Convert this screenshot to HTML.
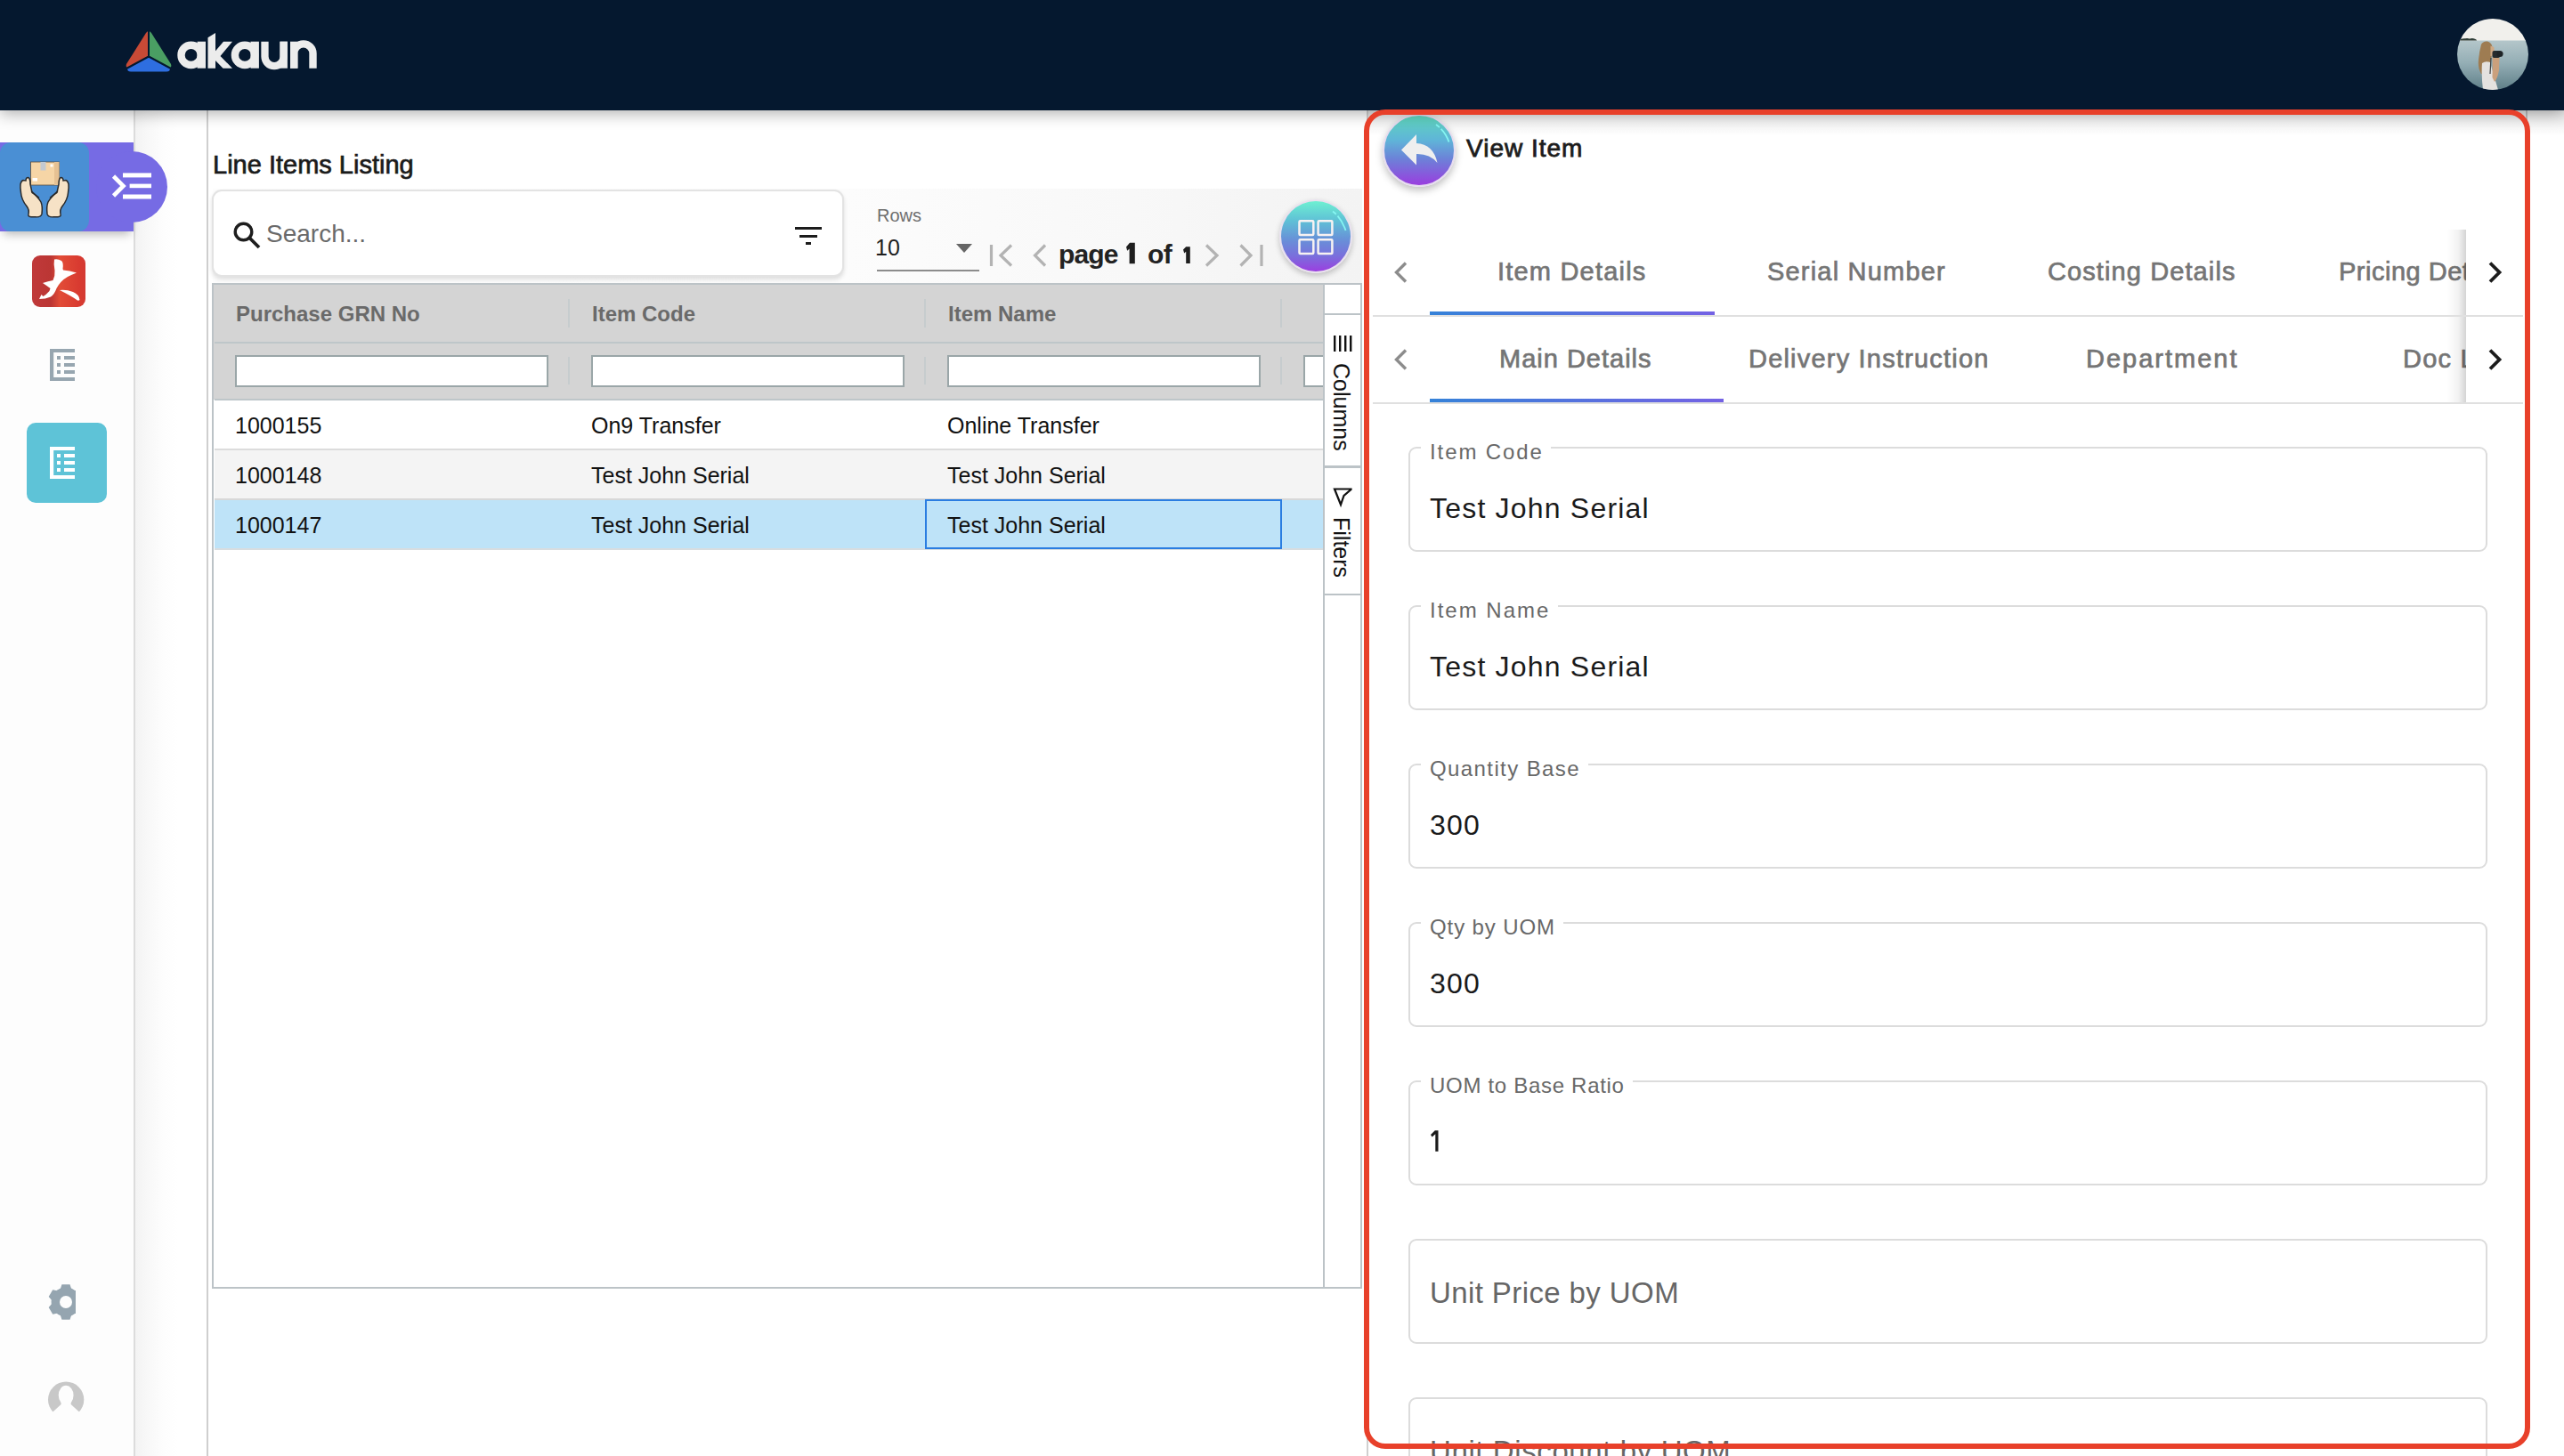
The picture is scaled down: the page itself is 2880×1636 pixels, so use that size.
<!DOCTYPE html>
<html><head><meta charset="utf-8">
<style>
*{box-sizing:border-box;margin:0;padding:0}
html,body{width:2880px;height:1636px;overflow:hidden;background:#fff;font-family:"Liberation Sans",sans-serif;position:relative}
.a{position:absolute}
.t{position:absolute;white-space:nowrap;line-height:1}
#hdr{left:0;top:0;width:2880px;height:124px;background:#05182f;z-index:5;box-shadow:0 4px 16px rgba(0,0,0,.3)}
#sb{left:0;top:124px;width:152px;height:1512px;background:#fdfdfd;border-right:2px solid #dcdcdc}
#gap{left:152px;top:124px;width:82px;height:1512px;background:linear-gradient(90deg,#f3f3f3 0,#f8f8f8 14px,#fdfdfd 32px,#fff 48px);border-right:2px solid #cfcfcf}
</style></head>
<body>
<div id="hdr" class="a">
  <!-- logo -->
  <svg class="a" style="left:140px;top:33px" width="54" height="50" viewBox="0 0 54 50">
    <path d="M27 2 L27 30 L3 43 Q1 42 2 39 L24 4 Q25.5 2 27 2Z" fill="#c84a36"/>
    <path d="M27 2 L27 30 L51 43 Q53 42 52 39 L30 4 Q28.5 2 27 2Z" fill="#4a9e63"/>
    <path d="M27 31 L51 44 Q51 47.5 47 47.5 L7 47.5 Q3 47.5 3 44Z" fill="#2e6ee0"/>
    <path d="M27 2 L27 30.5 M27 30.5 L2 44 M27 30.5 L52 44" stroke="#05182f" stroke-width="2" fill="none"/>
  </svg>
  <svg class="a" style="left:0;top:0" width="400" height="123" viewBox="0 0 400 123">
    <g fill="#ececec">
      <circle cx="214.6" cy="61.9" r="11.1" fill="none" stroke="#ececec" stroke-width="8.4"/>
      <rect x="221.6" y="46.7" width="9.4" height="30"/>
      <polygon points="233.5,42.3 242,37 242,76.7 233.5,76.7"/>
      <polygon points="241,58.5 251,46.7 261,46.7 247.5,63 261,76.7 250.5,76.7 241,67"/>
      <circle cx="275" cy="61.9" r="11.1" fill="none" stroke="#ececec" stroke-width="8.4"/>
      <rect x="281.5" y="46.7" width="9.4" height="30"/>
      <path d="M297.5 46.7 V63.5 A10.5 10.5 0 0 0 318.6 63.5 V46.7" fill="none" stroke="#ececec" stroke-width="8.3"/>
      <rect x="314.5" y="46.7" width="8.4" height="30"/>
      <rect x="326" y="46.7" width="8.4" height="30"/>
      <path d="M330.2 76.7 V60 A10.5 10.5 0 0 1 351.5 60 V76.7" fill="none" stroke="#ececec" stroke-width="8.4"/>
    </g>
  </svg>
  <!-- avatar -->
  <svg class="a" style="left:2760px;top:21px" width="80" height="80" viewBox="0 0 80 80">
    <defs><clipPath id="cav"><circle cx="40" cy="40" r="40"/></clipPath>
    <linearGradient id="sea" x1="0" y1="0" x2="0" y2="1"><stop offset="0" stop-color="#b4c6ca"/><stop offset=".45" stop-color="#94aeb5"/><stop offset="1" stop-color="#5e7e87"/></linearGradient></defs>
    <g clip-path="url(#cav)">
      <rect width="80" height="25" fill="#f1f0ec"/>
      <rect y="24.5" width="80" height="56" fill="url(#sea)"/>
      <path d="M1 24.5 Q4 22 9 22.3 Q12 21.8 14 22.6 Q17 21.5 20 22.8 Q22 23.5 22 24.5Z" fill="#2f3d36"/>
      <path d="M27 29 Q29 25 34 25.5 Q39 27 39.5 32 L39 41 Q37 50 35 58 Q32 62 27 62 Q23 56 24 46 Q25 36 27 29Z" fill="#9e7c52"/>
      <path d="M28 50 Q32 47 37 49 L46 80 L29 80 Q27 64 28 50Z" fill="#e4e2df"/>
      <path d="M37.5 30.5 L41.5 32 Q42 37 41 41.5 L37.5 42Z" fill="#cfa985"/>
      <path d="M39.5 43 Q44 41 47.5 44 L47 58 Q45 68 42 71 L39.5 66 Q40 55 39.5 43Z" fill="#caa07c"/>
      <rect x="39.5" y="36" width="8.5" height="8" rx="2" fill="#262b2e"/>
      <circle cx="48" cy="39.5" r="3.6" fill="#1f2427"/>
      <path d="M38 44 L37 62" stroke="#3a3f40" stroke-width="1.2"/>
    </g>
  </svg>
</div>

<div id="sb" class="a"></div>
<div id="gap" class="a"></div>

<!-- sidebar icons -->
<div class="a" style="left:0;top:160px;width:150px;height:100px;background:#766be4;z-index:3;box-shadow:0 7px 10px -4px rgba(0,0,0,.28)"></div>
<div class="a" style="left:108px;top:170px;width:80px;height:80px;border-radius:50%;background:#766be4;z-index:3"></div>
<div class="a" style="left:0;top:160px;width:100px;height:100px;border-radius:12px;background:#4a8fd4;z-index:4"></div>
<svg class="a" style="left:0;top:160px;z-index:5" width="100" height="100" viewBox="0 0 100 100">
  <g>
   <rect x="34.5" y="22" width="32" height="26" fill="#f6d5a6" stroke="#5a4a3a" stroke-width="0.8"/>
   <rect x="61" y="22" width="5.5" height="26" fill="#e6c193"/>
   <rect x="45.5" y="22" width="6" height="9.5" fill="#c4c9d0"/>
   <rect x="56.5" y="24.5" width="3" height="3" fill="#fff"/>
   <rect x="36.5" y="40" width="5.5" height="3.5" fill="#fff"/>
   <path transform="translate(0,-5) scale(1,0.96)" d="M29 50 Q29 46 32 46.5 Q34 48 34 54 L36 64 Q42 68 46 75 Q48 80 47 89 Q46 93 40 92.5 L35 92.5 Q31 92 32 89 Q33 84 30 80 Q24 72 23.5 64 Q22.5 58 23 54 Q24 50 26 49.5Z" fill="#f6e2c6" stroke="#2a2a2a" stroke-width="1.5"/>
   <path transform="translate(0,-5) scale(1,0.96)" d="M71 50 Q71 46 68 46.5 Q66 48 66 54 L64 64 Q58 68 54 75 Q52 80 53 89 Q54 93 60 92.5 L65 92.5 Q69 92 68 89 Q67 84 70 80 Q76 72 76.5 64 Q77.5 58 77 54 Q76 50 74 49.5Z" fill="#f6e2c6" stroke="#2a2a2a" stroke-width="1.5"/>
   <path transform="translate(0,-5) scale(1,0.96)" d="M35 62 Q39 66 44 70 M65 62 Q61 66 56 70" stroke="#2a2a2a" stroke-width="1.2" fill="none"/>
  </g>
</svg>
<svg class="a" style="left:120px;top:190px;z-index:5" width="56" height="40" viewBox="0 0 56 40">
  <path d="M7.5 8 L18.5 19 L7.5 30" stroke="#fff" stroke-width="4.6" fill="none"/>
  <rect x="18" y="4.4" width="32" height="5" fill="#fff"/>
  <rect x="25.6" y="16.6" width="24.4" height="4.6" fill="#fff"/>
  <rect x="18" y="28.5" width="32" height="5" fill="#fff"/>
</svg>
<!-- red app icon -->
<div class="a" style="left:36px;top:287px;width:60px;height:58px;border-radius:9px;background:linear-gradient(90deg,#c0393a 0%,#bb3634 35%,#e24c37 52%,#d83a30 90%,#d33a33 100%)"></div>
<svg class="a" style="left:36px;top:287px" width="60" height="58" viewBox="0 0 60 58">
  <path d="M25 4.5 Q29 3.5 33 6 Q35.5 8 34.5 15 L35 16.5 Q42 17 50 19.5 Q45 21.5 40 24 Q32 28.5 27.5 37 Q25 44 21 46.5 Q15 49 8 49 L10.5 44 L12.5 46 Q16 44 19.5 40 L20.5 37 Q15 33 12 31 Q18 29 23.5 28 Q26 23 25.5 17 Q24 10 25 4.5Z" fill="#fff"/>
  <path d="M31 39 Q38 38 46 41 Q53 44 53.5 50 Q52.5 51 51 50.5 Q45 46 31 39Z" fill="#fff"/>
</svg>
<!-- grey list icon -->
<svg class="a" style="left:56px;top:392px" width="28" height="36" viewBox="0 0 28 36">
  <g fill="#97a6b0"><rect x="0" y="0" width="4.2" height="36"/><rect x="0" y="0" width="28" height="4"/><rect x="0" y="32" width="28" height="4"/>
  <rect x="8" y="8" width="4" height="4"/><rect x="16" y="8" width="12" height="4"/>
  <rect x="8" y="16" width="4" height="4"/><rect x="16" y="16" width="12" height="4"/>
  <rect x="8" y="24" width="4" height="4"/><rect x="16" y="24" width="12" height="4"/></g>
</svg>
<div class="a" style="left:30px;top:475px;width:90px;height:90px;border-radius:10px;background:#5ec3d7"></div>
<svg class="a" style="left:56px;top:502px" width="28" height="36" viewBox="0 0 28 36">
  <g fill="#fff"><rect x="0" y="0" width="4.2" height="36"/><rect x="0" y="0" width="28" height="4"/><rect x="0" y="32" width="28" height="4"/>
  <rect x="8" y="8" width="4" height="4"/><rect x="16" y="8" width="12" height="4"/>
  <rect x="8" y="16" width="4" height="4"/><rect x="16" y="16" width="12" height="4"/>
  <rect x="8" y="24" width="4" height="4"/><rect x="16" y="24" width="12" height="4"/></g>
</svg>
<!-- gear -->
<svg class="a" style="left:50px;top:1439px" width="34.5" height="48" viewBox="0 0 34.5 48">
  <polygon points="17.93,8.98 19.46,4.32 28.54,4.32 30.07,8.98 33.97,11.23 38.77,10.22 43.32,18.09 40.04,21.75 40.04,26.25 43.32,29.91 38.77,37.78 33.97,36.77 30.07,39.02 28.54,43.68 19.46,43.68 17.93,39.02 14.03,36.77 9.23,37.78 4.68,29.91 7.96,26.25 7.96,21.75 4.68,18.09 9.23,10.22 14.03,11.23" fill="#95a5b0"/>
  <circle cx="24" cy="24" r="16.4" fill="#95a5b0"/>
  <circle cx="24" cy="24" r="7" fill="#fdfdfd"/>
</svg>
<!-- user -->
<svg class="a" style="left:50px;top:1545px" width="50" height="45" viewBox="0 0 50 45">
  <defs><clipPath id="ucl"><rect x="0" y="0" width="50" height="41.6"/></clipPath></defs>
  <g clip-path="url(#ucl)"><circle cx="24.15" cy="27.65" r="20.15" fill="#c8c8c8"/></g>
  <ellipse cx="24.15" cy="22.8" rx="8.4" ry="11" fill="#fdfdfd"/>
  <polygon points="18.6,30 29.7,30 29.7,33 39.5,42 8.8,42 18.6,33" fill="#fdfdfd"/>
</svg>



<!-- main content -->
<div class="t" style="left:239px;top:171px;font-size:29px;color:#1b1b1b;-webkit-text-stroke:0.7px #1b1b1b">Line Items Listing</div>
<div class="a" style="left:239px;top:212px;width:1291px;height:106px;background:linear-gradient(90deg,#fdfdfd 0,#fcfcfc 55%,#f8f8f8 80%,#f3f3f3 100%)"></div>
<div class="a" style="left:238px;top:213px;width:710px;height:98px;border-radius:11px;background:#fff;border:2px solid #e3e3e3;box-shadow:0 3px 5px rgba(0,0,0,.12)"></div>
<svg class="a" style="left:260px;top:247px" width="36" height="36" viewBox="0 0 36 36">
  <circle cx="13.5" cy="13.5" r="9.3" fill="none" stroke="#1e1e1e" stroke-width="3.4"/>
  <path d="M20.5 20.5 L31 31" stroke="#1e1e1e" stroke-width="3.8"/>
</svg>
<div class="t" style="left:299px;top:249px;font-size:28px;color:#6a6a6a">Search...</div>
<div class="a" style="left:893px;top:255px;width:30px;height:3px;background:#1c1c1c"></div>
<div class="a" style="left:898px;top:263.5px;width:20px;height:3px;background:#1c1c1c"></div>
<div class="a" style="left:904.5px;top:271.5px;width:6.5px;height:3px;background:#1c1c1c"></div>

<div class="t" style="left:985px;top:232px;font-size:20px;color:#6e6e6e">Rows</div>
<div class="t" style="left:983px;top:266px;font-size:25px;color:#1e1e1e">10</div>
<svg class="a" style="left:1072px;top:272px" width="22" height="14" viewBox="0 0 22 14"><path d="M2 2 H20 L11 12Z" fill="#666"/></svg>
<div class="a" style="left:985px;top:303px;width:115px;height:2px;background:#8c8c8c"></div>
<svg class="a" style="left:1105px;top:268px" width="320" height="38" viewBox="0 0 320 38">
  <g stroke="#b3b3b3" stroke-width="3.2" fill="none">
    <path d="M8.5 7 V31"/><path d="M31 7.5 L19 19 L31 30.5"/>
    <path d="M69 7.5 L57.5 19 L69 30.5"/>
    <path d="M250 7.5 L262 19 L250 30.5"/>
    <path d="M288.5 7.5 L300 19 L288.5 30.5"/><path d="M312 7 V31"/>
  </g>
</svg>
<div class="t" style="left:1189px;top:270.5px;font-size:30px;font-weight:700;letter-spacing:-0.9px;color:#222">page</div>
<svg class="a" style="left:1260px;top:268px" width="80" height="32" viewBox="1260 268 80 32"><path d="M1265 277.5 L1269 272.8 L1274.8 272.8 L1274.8 296.2 L1268.6 296.2 L1268.6 279.5 L1266.2 281.8Z" fill="#1e1e1e"/><path d="M1329 280.5 L1332.2 277.2 L1336.8 277.2 L1336.8 296 L1332.2 296 L1332.2 282.8 L1330.2 284.6Z" fill="#1e1e1e"/></svg>
<div class="t" style="left:1289px;top:270.5px;font-size:30px;font-weight:700;letter-spacing:-0.5px;color:#222">of</div>


<!-- table -->
<div class="a" style="left:238px;top:318px;width:1292px;height:1130px;border:2px solid #bcc3c7;background:#fff"></div>
<div class="a" style="left:240px;top:320px;width:1247px;height:129px;background:#d4d4d4"></div>
<div class="a" style="left:241px;top:384px;width:1246px;height:2px;background:#bec6c9"></div>
<div class="a" style="left:241px;top:448px;width:1246px;height:2px;background:#bec6c9"></div>
<div class="a" style="left:638px;top:336px;width:2px;height:32px;background:#c6ccce"></div>
<div class="a" style="left:1038px;top:336px;width:2px;height:32px;background:#c6ccce"></div>
<div class="a" style="left:1438px;top:336px;width:2px;height:32px;background:#c6ccce"></div>
<div class="a" style="left:638px;top:401px;width:2px;height:31px;background:#c6ccce"></div>
<div class="a" style="left:1038px;top:401px;width:2px;height:31px;background:#c6ccce"></div>
<div class="a" style="left:1438px;top:401px;width:2px;height:31px;background:#c6ccce"></div>
<div class="t" style="left:265px;top:340.5px;font-size:24px;font-weight:700;color:#6a6a6a">Purchase GRN No</div>
<div class="t" style="left:665px;top:340.5px;font-size:24px;font-weight:700;color:#6a6a6a">Item Code</div>
<div class="t" style="left:1065px;top:340.5px;font-size:24px;font-weight:700;color:#6a6a6a">Item Name</div>
<div class="a" style="left:264px;top:399px;width:352px;height:35.5px;border:2px solid #9aa6a8;background:#fff"></div>
<div class="a" style="left:664px;top:399px;width:352px;height:35.5px;border:2px solid #9aa6a8;background:#fff"></div>
<div class="a" style="left:1064px;top:399px;width:352px;height:35.5px;border:2px solid #9aa6a8;background:#fff"></div>
<div class="a" style="left:1464px;top:399px;width:23px;height:35.5px;border:2px solid #9aa6a8;border-right:none;background:#fff"></div>
<!-- rows -->
<div class="a" style="left:241px;top:504px;width:1246px;height:2px;background:#dcdcdc"></div>
<div class="a" style="left:241px;top:506px;width:1246px;height:54px;background:#f4f4f4"></div>
<div class="a" style="left:241px;top:560px;width:1246px;height:2px;background:#d8d8d8"></div>
<div class="a" style="left:241px;top:562px;width:1246px;height:54px;background:#bee3f8"></div>
<div class="a" style="left:241px;top:616px;width:1246px;height:2px;background:#d8dde0"></div>
<div class="a" style="left:1039px;top:561px;width:401px;height:56px;border:2px solid #2a7de1"></div>
<div class="t" style="left:264px;top:466px;font-size:25px;color:#111">1000155</div>
<div class="t" style="left:664px;top:466px;font-size:25px;color:#111">On9 Transfer</div>
<div class="t" style="left:1064px;top:466px;font-size:25px;color:#111">Online Transfer</div>
<div class="t" style="left:264px;top:522px;font-size:25px;color:#111">1000148</div>
<div class="t" style="left:664px;top:522px;font-size:25px;color:#111">Test John Serial</div>
<div class="t" style="left:1064px;top:522px;font-size:25px;color:#111">Test John Serial</div>
<div class="t" style="left:264px;top:578px;font-size:25px;color:#111">1000147</div>
<div class="t" style="left:664px;top:578px;font-size:25px;color:#111">Test John Serial</div>
<div class="t" style="left:1064px;top:578px;font-size:25px;color:#111">Test John Serial</div>
<!-- side panel -->
<div class="a" style="left:1486px;top:320px;width:42px;height:1126px;background:#fff;border-left:2px solid #bcc3c7"></div>
<div class="a" style="left:1488px;top:352px;width:40px;height:2px;background:#bcc3c7"></div>
<div class="a" style="left:1488px;top:523px;width:40px;height:3px;background:#bcc3c7"></div>
<div class="a" style="left:1488px;top:667px;width:40px;height:2px;background:#bcc3c7"></div>
<svg class="a" style="left:1496px;top:376px" width="24" height="22" viewBox="0 0 24 22">
  <g fill="#111"><rect x="2" y="1" width="2.4" height="18"/><rect x="8" y="1" width="2.4" height="18"/><rect x="14" y="1" width="2.4" height="18"/><rect x="20" y="1" width="2.4" height="18"/></g>
</svg>
<div class="t" style="left:1519px;top:408px;font-size:25px;color:#111;transform-origin:0 0;transform:rotate(90deg)">Columns</div>
<svg class="a" style="left:1496px;top:547px" width="24" height="24" viewBox="0 0 24 24">
  <path d="M3 2.5 L21.5 2.5 L21.5 3 L13.5 10 L10 20 Z" fill="none" stroke="#111" stroke-width="2.2" stroke-linejoin="miter"/>
</svg>
<div class="t" style="left:1519px;top:581px;font-size:25px;color:#111;transform-origin:0 0;transform:rotate(90deg)">Filters</div>

<!-- grid button -->
<div class="a" style="left:1437px;top:224px;width:82px;height:83px;border-radius:50%;border:2px solid #e9e1ee;background:linear-gradient(180deg,#6ef0d2 0%,#5fc0d6 28%,#6890d8 55%,#7a6fdc 78%,#9b3fe0 100%);box-shadow:0 3px 6px rgba(0,0,0,.22)"></div>
<svg class="a" style="left:1437px;top:224px" width="82" height="83" viewBox="0 0 82 83">
  <path d="M60 13.5 Q70 21 74.5 35" stroke="#86f5f2" stroke-width="1.8" fill="none" stroke-dasharray="5 2.5 60"/>
  <g fill="none" stroke="#f7f2f2" stroke-width="2.5">
   <rect x="22.5" y="24.2" width="15.8" height="15.8" rx="1"/><rect x="43.6" y="24.2" width="15.8" height="15.8" rx="1"/>
   <rect x="22.5" y="45.3" width="15.8" height="15.8" rx="1"/><rect x="43.6" y="45.3" width="15.8" height="15.8" rx="1"/>
  </g>
</svg>
<!-- right panel -->
<div class="a" style="left:1535px;top:123px;width:1345px;height:1513px;background:#fff;border-left:2px solid #d0d0d0"></div>
<div class="a" style="left:2837px;top:123px;width:2px;height:30px;background:#cfcfcf"></div>
<div class="a" style="left:1537px;top:123px;width:1343px;height:30px;background:linear-gradient(180deg,rgba(0,0,0,.10),rgba(0,0,0,0))"></div>
<!-- back button -->
<div class="a" style="left:1553px;top:128px;width:82px;height:82px;border-radius:50%;border:2px solid #e6dcef;background:linear-gradient(180deg,#5fd6bc 0%,#5fb5d8 35%,#6c82d8 62%,#9a3ddf 100%);box-shadow:0 4px 8px rgba(0,0,0,.25)"></div>
<svg class="a" style="left:1553px;top:128px" width="82" height="82" viewBox="0 0 82 82">
  <path d="M60 12 Q70 19 74.5 31.5" stroke="#86f5f2" stroke-width="1.8" fill="none" stroke-dasharray="5 2.5 60"/>
  <path d="M21 40.5 L38 23 L38 33 Q57 34 61.5 55 Q53 44.5 38 45 L38 57.5Z" fill="#efefef"/>
</svg>
<div class="t" style="left:1647px;top:152.5px;font-size:28px;color:#1c1c1c;-webkit-text-stroke:0.8px #1c1c1c;letter-spacing:1px">View Item</div>
<!-- tabs row 1 -->
<svg class="a" style="left:1562px;top:292px" width="24" height="28" viewBox="0 0 24 28"><path d="M17 3.5 L6.5 14 L17 24.5" stroke="#8c8c8c" stroke-width="3.4" fill="none"/></svg>
<div class="t" style="left:1682px;top:290.5px;font-size:29px;color:#757575;-webkit-text-stroke:0.7px #757575;letter-spacing:1.2px">Item Details</div>
<div class="t" style="left:1985px;top:290.5px;font-size:29px;color:#757575;-webkit-text-stroke:0.7px #757575;letter-spacing:1.2px">Serial Number</div>
<div class="t" style="left:2300px;top:290.5px;font-size:29px;color:#757575;-webkit-text-stroke:0.7px #757575;letter-spacing:1.1px">Costing Details</div>
<div class="a" style="left:2600px;top:258px;width:170px;height:96px;overflow:hidden">
  <div class="t" style="left:27px;top:32.5px;font-size:29px;color:#757575;-webkit-text-stroke:0.7px #757575;letter-spacing:0.5px">Pricing Details</div>
</div>
<div class="a" style="left:1606px;top:350px;width:320px;height:4px;background:linear-gradient(90deg,#3582d8,#7462e4)"></div>
<div class="a" style="left:1542px;top:354px;width:1292px;height:2px;background:#e0e0e0"></div>
<div class="a" style="left:2748px;top:258px;width:22px;height:96px;background:linear-gradient(90deg,rgba(0,0,0,0),rgba(0,0,0,.05) 60%,rgba(0,0,0,.17))"></div><div class="a" style="left:2770px;top:258px;width:64px;height:96px;background:#fff"></div>
<svg class="a" style="left:2790px;top:292px" width="24" height="28" viewBox="0 0 24 28"><path d="M7 3.5 L17.5 14 L7 24.5" stroke="#1c1c1c" stroke-width="3.8" fill="none"/></svg>
<!-- tabs row 2 -->
<svg class="a" style="left:1562px;top:390px" width="24" height="28" viewBox="0 0 24 28"><path d="M17 3.5 L6.5 14 L17 24.5" stroke="#8c8c8c" stroke-width="3.4" fill="none"/></svg>
<div class="t" style="left:1684px;top:388.5px;font-size:29px;color:#757575;-webkit-text-stroke:0.7px #757575;letter-spacing:1px">Main Details</div>
<div class="t" style="left:1964px;top:388.5px;font-size:29px;color:#757575;-webkit-text-stroke:0.7px #757575;letter-spacing:1.2px">Delivery Instruction</div>
<div class="t" style="left:2343px;top:388.5px;font-size:29px;color:#757575;-webkit-text-stroke:0.7px #757575;letter-spacing:2px">Department</div>
<div class="a" style="left:2600px;top:356px;width:170px;height:96px;overflow:hidden">
  <div class="t" style="left:99px;top:32.5px;font-size:29px;color:#757575;-webkit-text-stroke:0.7px #757575;letter-spacing:1.2px">Doc Link</div>
</div>
<div class="a" style="left:1606px;top:448px;width:330px;height:4px;background:linear-gradient(90deg,#3582d8,#7462e4)"></div>
<div class="a" style="left:1542px;top:452px;width:1292px;height:2px;background:#e0e0e0"></div>
<div class="a" style="left:2748px;top:356px;width:22px;height:96px;background:linear-gradient(90deg,rgba(0,0,0,0),rgba(0,0,0,.05) 60%,rgba(0,0,0,.17))"></div><div class="a" style="left:2770px;top:356px;width:64px;height:96px;background:#fff"></div>
<svg class="a" style="left:2790px;top:390px" width="24" height="28" viewBox="0 0 24 28"><path d="M7 3.5 L17.5 14 L7 24.5" stroke="#1c1c1c" stroke-width="3.8" fill="none"/></svg>
<!-- fields -->
<div class="a" style="left:1582px;top:502px;width:1212px;height:118px;border:2px solid #dcdcdc;border-radius:9px"></div>
<div class="a" style="left:1596px;top:500px;width:146px;height:6px;background:#fff"></div>
<div class="t" style="left:1606px;top:495.7px;font-size:24px;color:#686868;letter-spacing:1.9px">Item Code</div>
<div class="t" style="left:1606px;top:555.4px;font-size:32px;color:#1a1a1a;letter-spacing:1.2px">Test John Serial</div>
<div class="a" style="left:1582px;top:680px;width:1212px;height:118px;border:2px solid #dcdcdc;border-radius:9px"></div>
<div class="a" style="left:1596px;top:678px;width:154px;height:6px;background:#fff"></div>
<div class="t" style="left:1606px;top:673.7px;font-size:24px;color:#686868;letter-spacing:2.0px">Item Name</div>
<div class="t" style="left:1606px;top:733.4px;font-size:32px;color:#1a1a1a;letter-spacing:1.2px">Test John Serial</div>
<div class="a" style="left:1582px;top:858px;width:1212px;height:118px;border:2px solid #dcdcdc;border-radius:9px"></div>
<div class="a" style="left:1596px;top:856px;width:188px;height:6px;background:#fff"></div>
<div class="t" style="left:1606px;top:851.7px;font-size:24px;color:#686868;letter-spacing:1.4px">Quantity Base</div>
<div class="t" style="left:1606px;top:911.4px;font-size:32px;color:#1a1a1a;letter-spacing:1.2px">300</div>
<div class="a" style="left:1582px;top:1036px;width:1212px;height:118px;border:2px solid #dcdcdc;border-radius:9px"></div>
<div class="a" style="left:1596px;top:1034px;width:160px;height:6px;background:#fff"></div>
<div class="t" style="left:1606px;top:1029.7px;font-size:24px;color:#686868;letter-spacing:0.9px">Qty by UOM</div>
<div class="t" style="left:1606px;top:1089.4px;font-size:32px;color:#1a1a1a;letter-spacing:1.2px">300</div>
<div class="a" style="left:1582px;top:1214px;width:1212px;height:118px;border:2px solid #dcdcdc;border-radius:9px"></div>
<div class="a" style="left:1596px;top:1212px;width:238px;height:6px;background:#fff"></div>
<div class="t" style="left:1606px;top:1207.7px;font-size:24px;color:#686868;letter-spacing:0.7px">UOM to Base Ratio</div>
<svg class="a" style="left:1600px;top:1265px" width="24" height="34" viewBox="1600 1265 24 34"><path d="M1607 1275 L1611.8 1270.2 L1615.5 1270.2 L1615.5 1293.8 L1612.3 1293.8 L1612.3 1274.2 L1608.6 1277.4Z" fill="#1a1a1a"/></svg>
<div class="a" style="left:1582px;top:1392px;width:1212px;height:118px;border:2px solid #dcdcdc;border-radius:9px"></div>
<div class="t" style="left:1606px;top:1436px;font-size:33px;color:#666;letter-spacing:0.4px">Unit Price by UOM</div>
<div class="a" style="left:1582px;top:1570px;width:1212px;height:118px;border:2px solid #dcdcdc;border-radius:9px"></div>
<div class="t" style="left:1606px;top:1614px;font-size:33px;color:#666;letter-spacing:0.6px">Unit Discount by UOM</div>

<!-- red annotation box -->
<div class="a" style="left:1532px;top:123px;width:1310px;height:1505px;border:6px solid #e8402a;border-radius:24px;z-index:20"></div>

</body></html>
